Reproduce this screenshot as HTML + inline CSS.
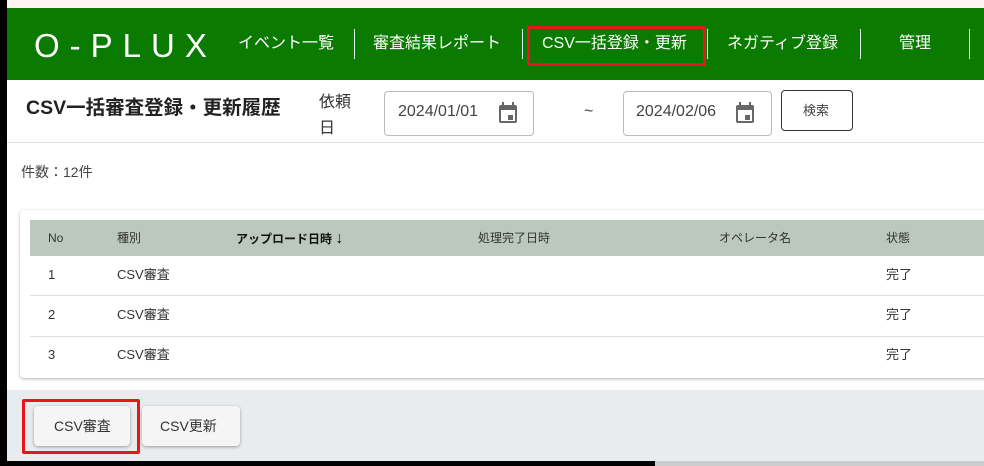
<!DOCTYPE html>
<html><head><meta charset="utf-8"><style>
*{margin:0;padding:0;box-sizing:border-box}
body{width:984px;height:466px;overflow:hidden;background:#000;font-family:"Liberation Sans","Noto Sans CJK JP",sans-serif;position:relative}
.a{position:absolute}
.t{position:absolute;white-space:nowrap;line-height:1}
</style></head><body>
<div class="a" style="left:7px;top:0;width:977px;height:8px;background:#fdf3f0"></div>
<div class="a" style="left:7px;top:8px;width:977px;height:72px;background:#0a7a00"></div>
<div class="t" style="left:34px;top:29px;font-size:33px;color:#fff;letter-spacing:10px">O-PLUX</div>
<div class="t" style="left:238px;top:36px;font-size:16px;color:#fff">イベント一覧</div>
<div class="a" style="left:354px;top:29px;width:1px;height:30px;background:#dfe"></div>
<div class="t" style="left:373px;top:36px;font-size:16px;color:#fff">審査結果レポート</div>
<div class="a" style="left:522px;top:29px;width:1px;height:30px;background:#dfe"></div>
<div class="t" style="left:542px;top:36px;font-size:16px;color:#fff">CSV一括登録・更新</div>
<div class="a" style="left:527px;top:26px;width:179px;height:40px;border:3px solid #e8161c"></div>
<div class="a" style="left:707px;top:29px;width:1px;height:30px;background:#dfe"></div>
<div class="t" style="left:727px;top:36px;font-size:16px;color:#fff">ネガティブ登録</div>
<div class="a" style="left:860px;top:29px;width:1px;height:30px;background:#dfe"></div>
<div class="t" style="left:899px;top:36px;font-size:16px;color:#fff">管理</div>
<div class="a" style="left:969px;top:29px;width:1px;height:30px;background:#dfe"></div>
<div class="a" style="left:7px;top:80px;width:977px;height:310px;background:#fff"></div>
<div class="a" style="left:7px;top:142px;width:977px;height:1px;background:#ddd"></div>
<div class="t" style="left:26px;top:99px;font-size:19.5px;font-weight:bold;color:#222">CSV一括審査登録・更新履歴</div>
<div class="t" style="left:319px;top:90px;font-size:16px;color:#333;line-height:26px">依頼<br>日</div>
<div class="a" style="left:384px;top:91px;width:150px;height:45px;border:1px solid #bbb;border-radius:4px"></div>
<div class="t" style="left:398px;top:104px;font-size:16px;color:#444">2024/01/01</div>
<svg class="a" style="left:497px;top:101px" width="22" height="24" viewBox="0 0 22 24"><rect x="2" y="4" width="18" height="18" rx="2" fill="#666"/><rect x="4" y="9" width="14" height="11" fill="#fff"/><rect x="5" y="1" width="2" height="5" fill="#666"/><rect x="15" y="1" width="2" height="5" fill="#666"/><rect x="11" y="14" width="5" height="5" fill="#666"/></svg>
<div class="t" style="left:584px;top:104px;font-size:16px;color:#444">~</div>
<div class="a" style="left:623px;top:91px;width:149px;height:45px;border:1px solid #bbb;border-radius:4px"></div>
<div class="t" style="left:636px;top:104px;font-size:16px;color:#444">2024/02/06</div>
<svg class="a" style="left:734px;top:101px" width="22" height="24" viewBox="0 0 22 24"><rect x="2" y="4" width="18" height="18" rx="2" fill="#666"/><rect x="4" y="9" width="14" height="11" fill="#fff"/><rect x="5" y="1" width="2" height="5" fill="#666"/><rect x="15" y="1" width="2" height="5" fill="#666"/><rect x="11" y="14" width="5" height="5" fill="#666"/></svg>
<div class="a" style="left:781px;top:90px;width:72px;height:41px;border:1px solid #333;border-radius:4px"></div>
<div class="t" style="left:803px;top:104px;font-size:13px;color:#444">検索</div>
<div class="t" style="left:21px;top:165px;font-size:14px;color:#444">件数：12件</div>
<div class="a" style="left:20px;top:210px;width:970px;height:168px;background:#fff;border-radius:4px;box-shadow:0 1px 3px rgba(0,0,0,.3)"></div>
<div class="a" style="left:30px;top:220px;width:954px;height:36px;background:#bcc8bc"></div>
<div class="t" style="left:48px;top:232px;font-size:12px;color:#333">No</div>
<div class="t" style="left:117px;top:232px;font-size:12px;color:#333">種別</div>
<div class="t" style="left:236px;top:231px;font-size:12px;color:#111;font-weight:bold">アップロード日時 <span style="font-size:16px;font-weight:normal">↓</span></div>
<div class="t" style="left:478px;top:232px;font-size:12px;color:#333">処理完了日時</div>
<div class="t" style="left:719px;top:232px;font-size:12px;color:#333">オペレータ名</div>
<div class="t" style="left:886px;top:232px;font-size:12px;color:#333">状態</div>
<div class="a" style="left:30px;top:295px;width:954px;height:1px;background:#ddd"></div>
<div class="a" style="left:30px;top:336px;width:954px;height:1px;background:#ddd"></div>
<div class="t" style="left:48px;top:268px;font-size:13px;color:#333">1</div><div class="t" style="left:117px;top:268px;font-size:13px;color:#333">CSV審査</div><div class="t" style="left:886px;top:268px;font-size:13px;color:#333">完了</div>
<div class="t" style="left:48px;top:308px;font-size:13px;color:#333">2</div><div class="t" style="left:117px;top:308px;font-size:13px;color:#333">CSV審査</div><div class="t" style="left:886px;top:308px;font-size:13px;color:#333">完了</div>
<div class="t" style="left:48px;top:348px;font-size:13px;color:#333">3</div><div class="t" style="left:117px;top:348px;font-size:13px;color:#333">CSV審査</div><div class="t" style="left:886px;top:348px;font-size:13px;color:#333">完了</div>
<div class="a" style="left:7px;top:390px;width:977px;height:71px;background:#e9ecef"></div>
<div class="a" style="left:655px;top:461px;width:329px;height:5px;background:#ccc"></div>
<div class="a" style="left:22px;top:399px;width:118px;height:55px;border:3px solid #e8161c;border-radius:2px"></div>
<div class="a" style="left:34px;top:406px;width:96px;height:40px;background:#f5f5f5;border-radius:4px;box-shadow:0 1px 3px rgba(0,0,0,.35)"></div>
<div class="t" style="left:54px;top:419px;font-size:14px;color:#333">CSV審査</div>
<div class="a" style="left:142px;top:406px;width:98px;height:40px;background:#f5f5f5;border-radius:4px;box-shadow:0 1px 3px rgba(0,0,0,.35)"></div>
<div class="t" style="left:160px;top:419px;font-size:14px;color:#333">CSV更新</div>
</body></html>
